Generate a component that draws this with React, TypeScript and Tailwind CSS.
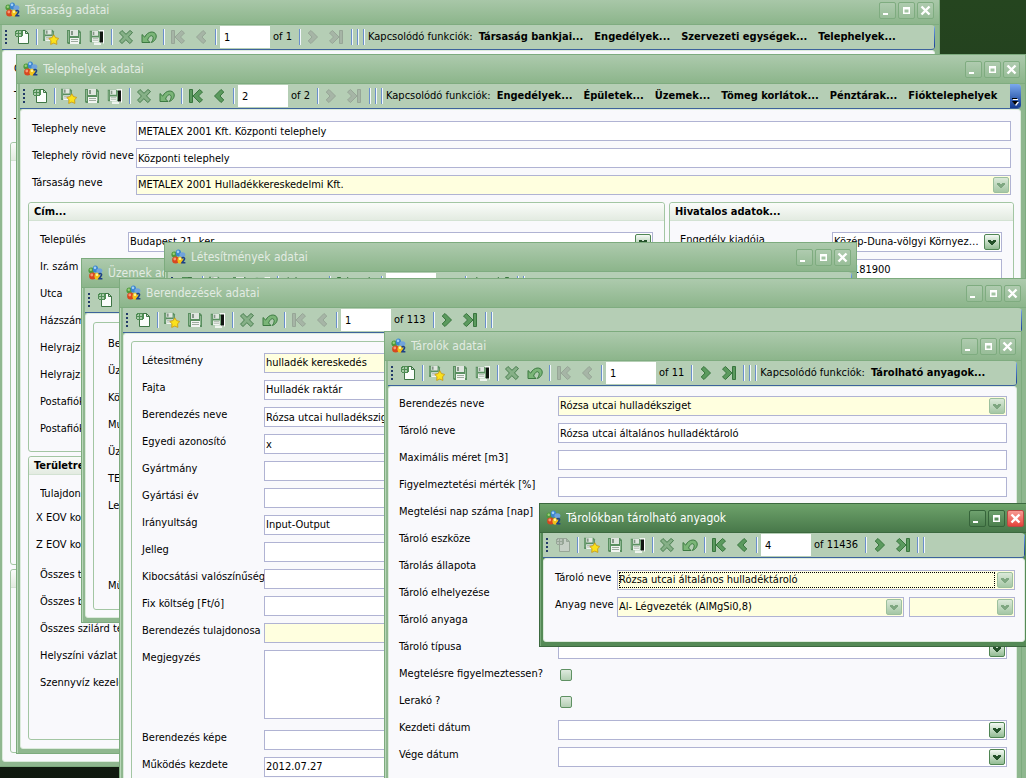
import { useId, type ReactNode } from "react";

type ToolState = { create?: boolean; back?: boolean; forward?: boolean };

function AppIcon() {
  return (
    <svg className="size-4 shrink-0" viewBox="0 0 16 16" aria-hidden="true">
      <circle cx="3.4" cy="5.6" r="3" fill="#4f9a3c" />
      <circle cx="2.8" cy="4.8" r="1.2" fill="#9ad07c" />
      <ellipse cx="7.4" cy="4" rx="2.7" ry="3.6" fill="#3b86cf" />
      <ellipse cx="7" cy="2.8" rx="1.3" ry="1.4" fill="#a5d2f6" />
      <ellipse cx="11.4" cy="5.8" rx="3" ry="2.5" fill="#6fa3dc" />
      <circle cx="4.6" cy="11" r="3.5" fill="#d8471f" />
      <circle cx="3.8" cy="10" r="1.400" fill="#f79a73" />
      <ellipse cx="9.4" cy="11.200" rx="2.900" ry="3.500" fill="#f0c21c" />
      <circle cx="9" cy="9.800" r="1.300" fill="#fff3a0" />
      <path d="M10.800 9.400c.5-1.300 2.900-1.200 2.800.4-.1 1.100-1.500 2-2.600 3.900h3.400" fill="none" stroke="#1d3f86" strokeWidth="1.600" />
    </svg>
  );
}

function Floppy() {
  return (
    <>
      <path d="M1 1h12l2 2v12H2l-1-1z" fill="#5a8f60" />
      <path d="M2 2h1v11H2zM13 4h1v9h-1z" fill="#8db690" />
      <path d="M4 1h8v6H4z" fill="#dfe6df" />
      <path d="M5 2h2v4H5z" fill="#869688" />
      <path d="M4 9h9v6H4z" fill="#f2f5f2" />
      <path d="M5 10.500h7M5 12.500h7" stroke="#9eac9f" />
    </>
  );
}

const NAV = "#5b9a5e";
const NAV_EDGE = "#39763e";
const OFF = "#a6b5a6";
const OFF_EDGE = "#97a697";

function NewIcon({ off }: { off: boolean }) {
  const edge = off ? OFF_EDGE : "#3f7645";
  return (
    <svg className="size-4" viewBox="0 0 16 16" aria-hidden="true">
      <path d="M4.500 1.500h7l3 3v10h-10z" fill={off ? "#c6d0c6" : "#fbfdfb"} stroke={edge} />
      <path d="M11.500 1.500v3h3z" fill={off ? OFF : "#cfe0d0"} stroke={edge} />
      <path d="M2 1h6v1h1v5H8v1H2V7H1V2h1z" fill={off ? OFF_EDGE : "#4f8d54"} />
      <path d="M3 2h1v2H2V3h1zM5 2h2v2H5zM2 5h2v2H2zM5 5h2v2H5z" fill={off ? "#b9c4b9" : "#a9cbaa"} />
    </svg>
  );
}

function SaveNewIcon() {
  return (
    <svg className="size-4" viewBox="0 0 16 16" aria-hidden="true">
      <g transform="translate(-1 0) scale(.8)">
        <Floppy />
      </g>
      <path
        d="M10.800 5.800l1.700 2.800 3.200.8-2.100 2.500.3 3.500-3.100-1.300-3.100 1.300.3-3.500-2.100-2.500 3.200-.8z"
        fill="#fae11c"
        stroke="#c8960f"
        strokeWidth=".8"
        strokeLinejoin="round"
      />
    </svg>
  );
}

function SaveIcon() {
  return (
    <svg className="size-4" viewBox="0 0 16 16" aria-hidden="true">
      <Floppy />
    </svg>
  );
}

function SaveCloseIcon() {
  return (
    <svg className="size-4" viewBox="0 0 16 16" aria-hidden="true">
      <path d="M9 1h6v13h-3v2H5v-3h4z" fill="#eef4ee" />
      <g transform="translate(0 1) scale(.76 .82)">
        <Floppy />
      </g>
      <path d="M11 2.500h3v11h-3z" fill="#111611" />
      <path d="M14.500 1.500v13" stroke="#fff" />
    </svg>
  );
}

function DeleteIcon() {
  return (
    <svg className="size-4" viewBox="0 0 16 16" aria-hidden="true">
      <path
        d="M1.500 4L4 1.500 8 5.300 12 1.500 14.500 3.500 10.500 7.900 14.500 12 11.800 14.500 7.900 10.700 4 14.500 1.500 12.200 5.400 8z"
        fill="#86b087"
        stroke="#4a7f50"
        strokeLinejoin="round"
      />
    </svg>
  );
}

function UndoIcon() {
  return (
    <svg className="size-4" viewBox="0 0 16 16" aria-hidden="true">
      <path
        d="M1 5.500v8h8L6.600 11C7.500 8 10 5.700 11.500 7.200c1.400 1.500.5 4-1.200 6.300 3.700-1.300 5.600-4.600 4.700-7.700C13.800 1.900 7 1.600 3.700 8.100z"
        fill="#7ab577"
        stroke="#3c7a41"
        strokeLinejoin="round"
      />
    </svg>
  );
}

function NavIcon({ kind, off }: { kind: "first" | "prev" | "next" | "last"; off: boolean }) {
  const fill = off ? OFF : NAV;
  const stroke = off ? OFF_EDGE : NAV_EDGE;
  const flip = kind === "next" || kind === "last";
  const bar = kind === "first" || kind === "last";
  return (
    <svg className={flip ? "size-4 -scale-x-100" : "size-4"} viewBox="0 0 16 16" aria-hidden="true">
      {bar && <path d="M1.500 1.500h3v13h-3z" fill={fill} stroke={stroke} />}
      <path
        d={bar ? "M5 8l6.500-6.500 3 2.500L10.500 8l4 4-3 2.500z" : "M3.500 8L10 1.500 12.800 4 9 8l3.800 4L10 14.500z"}
        fill={fill}
        stroke={stroke}
      />
    </svg>
  );
}

function ToolButton({ label, off, children }: { label: string; off?: boolean; children: ReactNode }) {
  return (
    <button type="button" aria-label={label} disabled={off} className="flex h-6 w-[23px] shrink-0 items-center justify-center">
      {children}
    </button>
  );
}

function Sep() {
  return <span className="mr-px ml-[3px] h-4 w-[2px] shrink-0 border-l border-[#6a8fcb] bg-[#f2f7fb]" />;
}

type ToolbarProps = { page: string; total: string; state?: ToolState; links?: string[]; related?: boolean; more?: boolean };

function Toolbar({ page, total, state = {}, links = [], related, more }: ToolbarProps) {
  const { create = true, back = true, forward = true } = state;
  return (
    <div className="relative flex h-[25px] shrink-0 items-center overflow-hidden rounded-r-sm border-b border-[#3d639c] bg-[#b5ceb5] pl-[3px] whitespace-nowrap">
      <span className="flex shrink-0 flex-col gap-[2px] pr-[3px]">
        {[0, 1, 2, 3].map((n) => (
          <span key={n} className="size-[2px] bg-[#223a68]" />
        ))}
      </span>
      <ToolButton label="Új" off={!create}><NewIcon off={!create} /></ToolButton>
      <Sep />
      <ToolButton label="Mentés és új"><SaveNewIcon /></ToolButton>
      <ToolButton label="Mentés"><SaveIcon /></ToolButton>
      <ToolButton label="Mentés és bezárás"><SaveCloseIcon /></ToolButton>
      <Sep />
      <ToolButton label="Törlés"><DeleteIcon /></ToolButton>
      <ToolButton label="Visszavonás"><UndoIcon /></ToolButton>
      <Sep />
      <ToolButton label="Első" off={!back}><NavIcon kind="first" off={!back} /></ToolButton>
      <ToolButton label="Előző" off={!back}><NavIcon kind="prev" off={!back} /></ToolButton>
      <Sep />
      <input aria-label="Rekord" defaultValue={page} className="ml-[2px] h-[22px] w-[50px] shrink-0 bg-white px-1 outline-none" />
      <span className="mr-1 ml-[3px] shrink-0">of {total}</span>
      <Sep />
      <ToolButton label="Következő" off={!forward}><NavIcon kind="next" off={!forward} /></ToolButton>
      <ToolButton label="Utolsó" off={!forward}><NavIcon kind="last" off={!forward} /></ToolButton>
      <Sep />
      <Sep />
      {related && (
        <>
          <Sep />
          <span className="mr-[6px] ml-[2px] shrink-0">Kapcsolódó funkciók:</span>
        </>
      )}
      <span className="flex shrink-0 gap-[11px] font-bold">
        {links.map((link) => (
          <button key={link} type="button">{link}</button>
        ))}
      </span>
      {more ? (
        <button
          type="button"
          aria-label="További elemek"
          className="absolute inset-y-0 right-0 flex w-[11px] items-end justify-center bg-gradient-to-b from-[#7ba9ee] to-[#12398f] pb-[2px]"
        >
          <svg className="h-2 w-[7px]" viewBox="0 0 7 8" aria-hidden="true">
            <path d="M1 1.500h5" stroke="#fff" />
            <path d="M0 .500h5" stroke="#000" />
            <path d="M1 4h6L4 8z" fill="#fff" />
            <path d="M0 3h6L3 7z" fill="#000" />
          </svg>
        </button>
      ) : (
        <span className="absolute inset-y-0 right-0 w-px bg-gradient-to-b from-[#7ba9ee] to-[#12398f]" />
      )}
    </div>
  );
}

function CaptionButton({ label, kind, active }: { label: string; kind: "min" | "max" | "close"; active?: boolean }) {
  const tone =
    active && kind === "close"
      ? "border-[#b84a44] bg-gradient-to-b from-[#f79a93] to-[#e4423b]"
      : active
        ? "border-[#36643a] bg-gradient-to-b from-[#6fa26f] to-[#4c7f4e]"
        : "border-[#7fac80] bg-gradient-to-b from-[#afcbaf] to-[#98bd98]";
  return (
    <button type="button" aria-label={label} className={`flex size-[17px] items-center justify-center rounded-[2px] border ${tone}`}>
      <svg className="size-[11px]" viewBox="0 0 11 11" aria-hidden="true">
        {kind === "min" && <path d="M1 9h5" stroke="#fff" strokeWidth="2" />}
        {kind === "max" && <path d="M2 2h7v7H2zM3.500 4.500v3h4v-3z" fill="#fff" fillRule="evenodd" />}
        {kind === "close" && <path d="M1.500 1.500l8 8M9.500 1.500l-8 8" stroke="#fff" strokeWidth="2.400" />}
      </svg>
    </button>
  );
}

type WindowProps = { title: string; place: string; active?: boolean; toolbar: ToolbarProps; children?: ReactNode };

function Window({ title, place, active, toolbar, children }: WindowProps) {
  const frame = active
    ? "border-[#3c693f] bg-[#558a56] shadow-[inset_1px_1px_0_#79a97a]"
    : "border-[#7dab7e] bg-[#8fb78f] shadow-[inset_1px_1px_0_#b9d6b9]";
  const bar = active
    ? "from-[#6ea36b] to-[#48784a] border-[#3c693f] text-white"
    : "from-[#adcaad] to-[#8cb58b] border-[#7fac80] text-[#e2ebe2]";
  return (
    <section aria-label={title} className={`absolute flex flex-col overflow-hidden border pr-1 pb-1 pl-[3px] ${frame} ${place}`}>
      <header className={`-mr-1 -ml-[3px] flex h-[29px] shrink-0 items-center gap-1 border-b bg-gradient-to-b pr-[5px] pl-[6px] ${bar}`}>
        <AppIcon />
        <h2 className="grow truncate text-[12px] leading-4">{title}</h2>
        <div className="flex gap-[2px]">
          <CaptionButton kind="min" label="Kis méret" active={active} />
          <CaptionButton kind="max" label="Teljes méret" active={active} />
          <CaptionButton kind="close" label="Bezárás" active={active} />
        </div>
      </header>
      <Toolbar {...toolbar} />
      <div className="min-h-0 grow overflow-hidden rounded-[3px] border border-[#dcebdc] bg-[#f9f9fc]">{children}</div>
    </section>
  );
}

function Arrow({ off }: { off?: boolean }) {
  return (
    <span
      className={`pointer-events-none absolute top-[2px] right-[2px] flex size-4 items-center justify-center rounded-[2px] border bg-gradient-to-b ${
        off ? "border-[#9cc09d] from-[#dbe9d9] to-[#a5c7a5]" : "border-[#4f8553] from-[#f4f9f4] to-[#93bc94]"
      }`}
    >
      <svg className="h-[5px] w-[8px]" viewBox="0 0 8 5" shapeRendering="crispEdges" aria-hidden="true">
        <path d="M0 0h3v1h2V0h3v2H7v1H6v1H5v1H3V4H2V3H1V2H0z" fill={off ? "#7fa781" : "#24512a"} />
      </svg>
    </span>
  );
}

type ControlProps = { id?: string; value?: string; kind?: "text" | "combo" | "area" | "check"; locked?: boolean; focus?: boolean; label?: string };

function Control({ id, value = "", kind = "text", locked, focus, label }: ControlProps) {
  const tone = locked ? "bg-[#ffffdf]" : "bg-white";
  if (kind === "check") {
    return (
      <input
        id={id}
        type="checkbox"
        className="mt-[3px] ml-[2px] size-3 appearance-none rounded-[2px] border border-[#5f9163] bg-gradient-to-b from-[#dfeadf] to-[#b4cfb4]"
      />
    );
  }
  if (kind === "area") {
    return <textarea id={id} defaultValue={value} className="mb-[11px] h-[69px] min-w-0 grow resize-none border border-[#b0b3d3] bg-white px-px outline-none" />;
  }
  if (kind === "combo") {
    return (
      <span className="relative flex h-5 min-w-0 grow">
        <select id={id} aria-label={label} className={`w-full appearance-none truncate border border-[#b0b3d3] pr-[22px] pl-px outline-none ${tone}`}>
          <option>{value}</option>
        </select>
        {focus && <span className="pointer-events-none absolute top-[2px] right-5 bottom-[2px] left-[2px] border border-dotted border-black" />}
        <Arrow off={locked} />
      </span>
    );
  }
  return <input id={id} defaultValue={value} className={`h-5 min-w-0 grow border border-[#b0b3d3] px-px outline-none ${tone}`} />;
}

function Row({ label, width, children, ...control }: ControlProps & { label: string; width: string; children?: ReactNode }) {
  const id = useId();
  return (
    <div className="flex min-h-[27px] items-start">
      <label htmlFor={id} className={`shrink-0 leading-4 whitespace-nowrap ${width}`}>{label}</label>
      <Control id={id} {...control} />
      {children}
    </div>
  );
}

function Group({ title, className = "", children }: { title?: string; className?: string; children?: ReactNode }) {
  return (
    <fieldset className={`min-w-0 overflow-hidden rounded-[3px] border border-[#a3c6a3] ${className}`}>
      {title !== undefined && (
        <div className="h-[18px] border-b border-[#d3e2d3] bg-gradient-to-b from-[#fafcfa] to-[#e3ebe1] pl-[5px] leading-[18px] font-bold">{title}</div>
      )}
      {children}
    </fieldset>
  );
}

const CIM_ROWS = ["Ir. szám", "Utca", "Házszám", "Helyrajzi sz.", "Helyrajzi sz. 2", "Postafiók", "Postafiók 2"];
const TERULET_ROWS = [
  "Összes terület",
  "Összes beépített",
  "Összes szilárd ter.",
  "Helyszíni vázlat sz.",
  "Szennyvíz kezelés",
];

const BERENDEZES: { label: string; value?: string; kind?: "text" | "combo" | "area"; locked?: boolean }[] = [
  { label: "Létesitmény", value: "hulladék kereskedés", kind: "combo", locked: true },
  { label: "Fajta", value: "Hulladék raktár", kind: "combo" },
  { label: "Berendezés neve", value: "Rózsa utcai hulladéksziget" },
  { label: "Egyedi azonosító", value: "x" },
  { label: "Gyártmány" },
  { label: "Gyártási év" },
  { label: "Irányultság", value: "Input-Output", kind: "combo" },
  { label: "Jelleg" },
  { label: "Kibocsátási valószínűség" },
  { label: "Fix költség [Ft/ó]" },
  { label: "Berendezés tulajdonosa", kind: "combo", locked: true },
  { label: "Megjegyzés", kind: "area" },
  { label: "Berendezés képe" },
  { label: "Működés kezdete", value: "2012.07.27", kind: "combo" },
];

const TAROLO: { label: string; value?: string; kind?: "text" | "combo" | "check"; locked?: boolean }[] = [
  { label: "Berendezés neve", value: "Rózsa utcai hulladéksziget", kind: "combo", locked: true },
  { label: "Tároló neve", value: "Rózsa utcai általános hulladéktároló" },
  { label: "Maximális méret [m3]" },
  { label: "Figyelmeztetési mérték [%]" },
  { label: "Megtelési nap száma [nap]" },
  { label: "Tároló eszköze", kind: "combo" },
  { label: "Tárolás állapota", kind: "combo" },
  { label: "Tároló elhelyezése", kind: "combo" },
  { label: "Tároló anyaga", kind: "combo" },
  { label: "Tároló típusa", kind: "combo" },
  { label: "Megtelésre figyelmeztessen?", kind: "check" },
  { label: "Lerakó ?", kind: "check" },
  { label: "Kezdeti dátum", kind: "combo" },
  { label: "Vége dátum", kind: "combo" },
];

export default function App() {
  return (
    <main className="relative h-screen overflow-hidden bg-gradient-to-b from-[#25451f] via-[#1d331d] to-[#10190f] font-['DejaVu_Sans_Condensed','DejaVu_Sans',sans-serif] text-[11px] leading-[14px] text-black">
      <Window
        title="Társaság adatai"
        place="-top-[5px] -left-[2px] h-[772px] w-[942px]"
        toolbar={{
          page: "1",
          total: "1",
          state: { back: false, forward: false },
          related: true,
          links: ["Társaság bankjai...", "Engedélyek...", "Szervezeti egységek...", "Telephelyek..."],
        }}
      >
        <div className="flex h-full flex-col px-[7px] pt-[10px] pb-2">
          <div className="pl-1">
            <Row label="Cég" width="w-[104px]" />
            <Row label="Típus" width="w-[104px]" />
            <Row label="Tag" width="w-[104px]" />
          </div>
          <Group title="" className="h-[423px] shrink-0" />
          <Group title="" className="mt-1 grow" />
        </div>
      </Window>

      <Window
        title="Telephelyek adatai"
        place="top-[54px] left-4 h-[700px] w-[1010px]"
        toolbar={{
          page: "2",
          total: "2",
          state: { forward: false },
          related: true,
          more: true,
          links: ["Engedélyek...", "Épületek...", "Üzemek...", "Tömeg korlátok...", "Pénztárak...", "Fióktelephelyek"],
        }}
      >
        <div className="flex h-full flex-col pt-[11px] pr-[6px] pb-2 pl-[7px]">
          <div className="pr-[3px] pl-1">
            <Row label="Telephely neve" width="w-[104px]" value="METALEX 2001 Kft. Központi telephely" />
            <Row label="Telephely rövid neve" width="w-[104px]" value="Központi telephely" />
            <Row label="Társaság neve" width="w-[104px]" value="METALEX 2001 Hulladékkereskedelmi Kft." kind="combo" locked />
          </div>
          <div className="flex min-h-0 grow gap-1">
            <div className="flex min-w-0 grow flex-col gap-1">
              <Group title="Cím..." className="h-[250px] shrink-0">
                <div className="px-[11px] pt-[11px]">
                  <Row label="Település" width="w-[88px]" value="Budapest 21. ker." kind="combo" />
                  {CIM_ROWS.map((label) => (
                    <Row key={label} label={label} width="w-[88px]" />
                  ))}
                </div>
              </Group>
              <Group title="Területrendezés..." className="grow">
                <div className="px-[11px] pt-[11px]">
                  <div className="h-6 overflow-hidden">
                    <Row label="Tulajdoni lap" width="w-[140px]" />
                  </div>
                  <div className="-ml-1 pb-[3px]">
                    <Row label="X EOV koordináta" width="w-[144px]" />
                    <Row label="Z EOV koordináta" width="w-[144px]" />
                  </div>
                  {TERULET_ROWS.map((label) => (
                    <Row key={label} label={label} width="w-[140px]" />
                  ))}
                </div>
              </Group>
            </div>
            <Group title="Hivatalos adatok..." className="w-[345px] shrink-0">
              <div className="pt-[11px] pr-[11px] pl-[10px]">
                <Row label="Engedély kiadója" width="w-[152px]" value="Közép-Duna-völgyi Környezetvédelmi Felügyelőség" kind="combo" />
                <Row label="KTJ szám" width="w-[152px]" value="100181900" />
              </div>
            </Group>
          </div>
        </div>
      </Window>

      <Window title="Üzemek adatai" place="top-[258px] left-[81px] h-[365px] w-[700px]" toolbar={{ page: "1", total: "1" }}>
        <div className="h-full px-[7px] pt-2 pb-[7px]">
          <Group className="h-full pt-[13px] pr-3 pl-[14px]">
            {["Beren.", "Üzem", "Kör", "Munka", "Üzem 2", "TEÁOR", "Leírás"].map((label) => (
              <Row key={label} label={label} width="w-[120px]" />
            ))}
            <div className="pt-[53px]">
              <Row label="Műk." width="w-[120px]" />
            </div>
          </Group>
        </div>
      </Window>

      <Window title="Létesítmények adatai" place="top-[242px] left-[164px] h-[370px] w-[693px]" toolbar={{ page: "1", total: "1" }} />

      <Window
        title="Berendezések adatai"
        place="top-[278px] left-[119px] h-[540px] w-[908px]"
        toolbar={{ page: "1", total: "113", state: { back: false } }}
      >
        <div className="h-full px-[7px] pt-[7px]">
          <Group className="h-full pt-[11px] pr-3 pl-[10px]">
            {BERENDEZES.map((field) => (
              <Row key={field.label} width="w-[122px]" {...field} />
            ))}
          </Group>
        </div>
      </Window>

      <Window
        title="Tárolók adatai"
        place="top-[331px] left-[384px] h-[500px] w-[638px]"
        toolbar={{ page: "1", total: "11", state: { back: false }, related: true, links: ["Tárolható anyagok..."] }}
      >
        <div className="pt-[9px] pr-[9px] pl-[10px]">
          {TAROLO.map((field) => (
            <Row key={field.label} width="w-[159px]" {...field} />
          ))}
        </div>
      </Window>

      <Window
        title="Tárolókban tárolható anyagok"
        active
        place="top-[503px] left-[539px] h-36 w-[491px]"
        toolbar={{ page: "4", total: "11436", state: { create: false } }}
      >
        <div className="pt-[11px] pr-[9px] pl-[11px]">
          <Row label="Tároló neve" width="w-[62px]" value="Rózsa utcai általános hulladéktároló" kind="combo" locked focus />
          <Row label="Anyag neve" width="w-[62px]" value="Al- Légvezeték (AlMgSi0,8)" kind="combo" locked>
            <span className="ml-[5px] flex w-[106px] shrink-0">
              <Control label="Mértékegység" kind="combo" locked />
            </span>
          </Row>
        </div>
      </Window>
    </main>
  );
}
